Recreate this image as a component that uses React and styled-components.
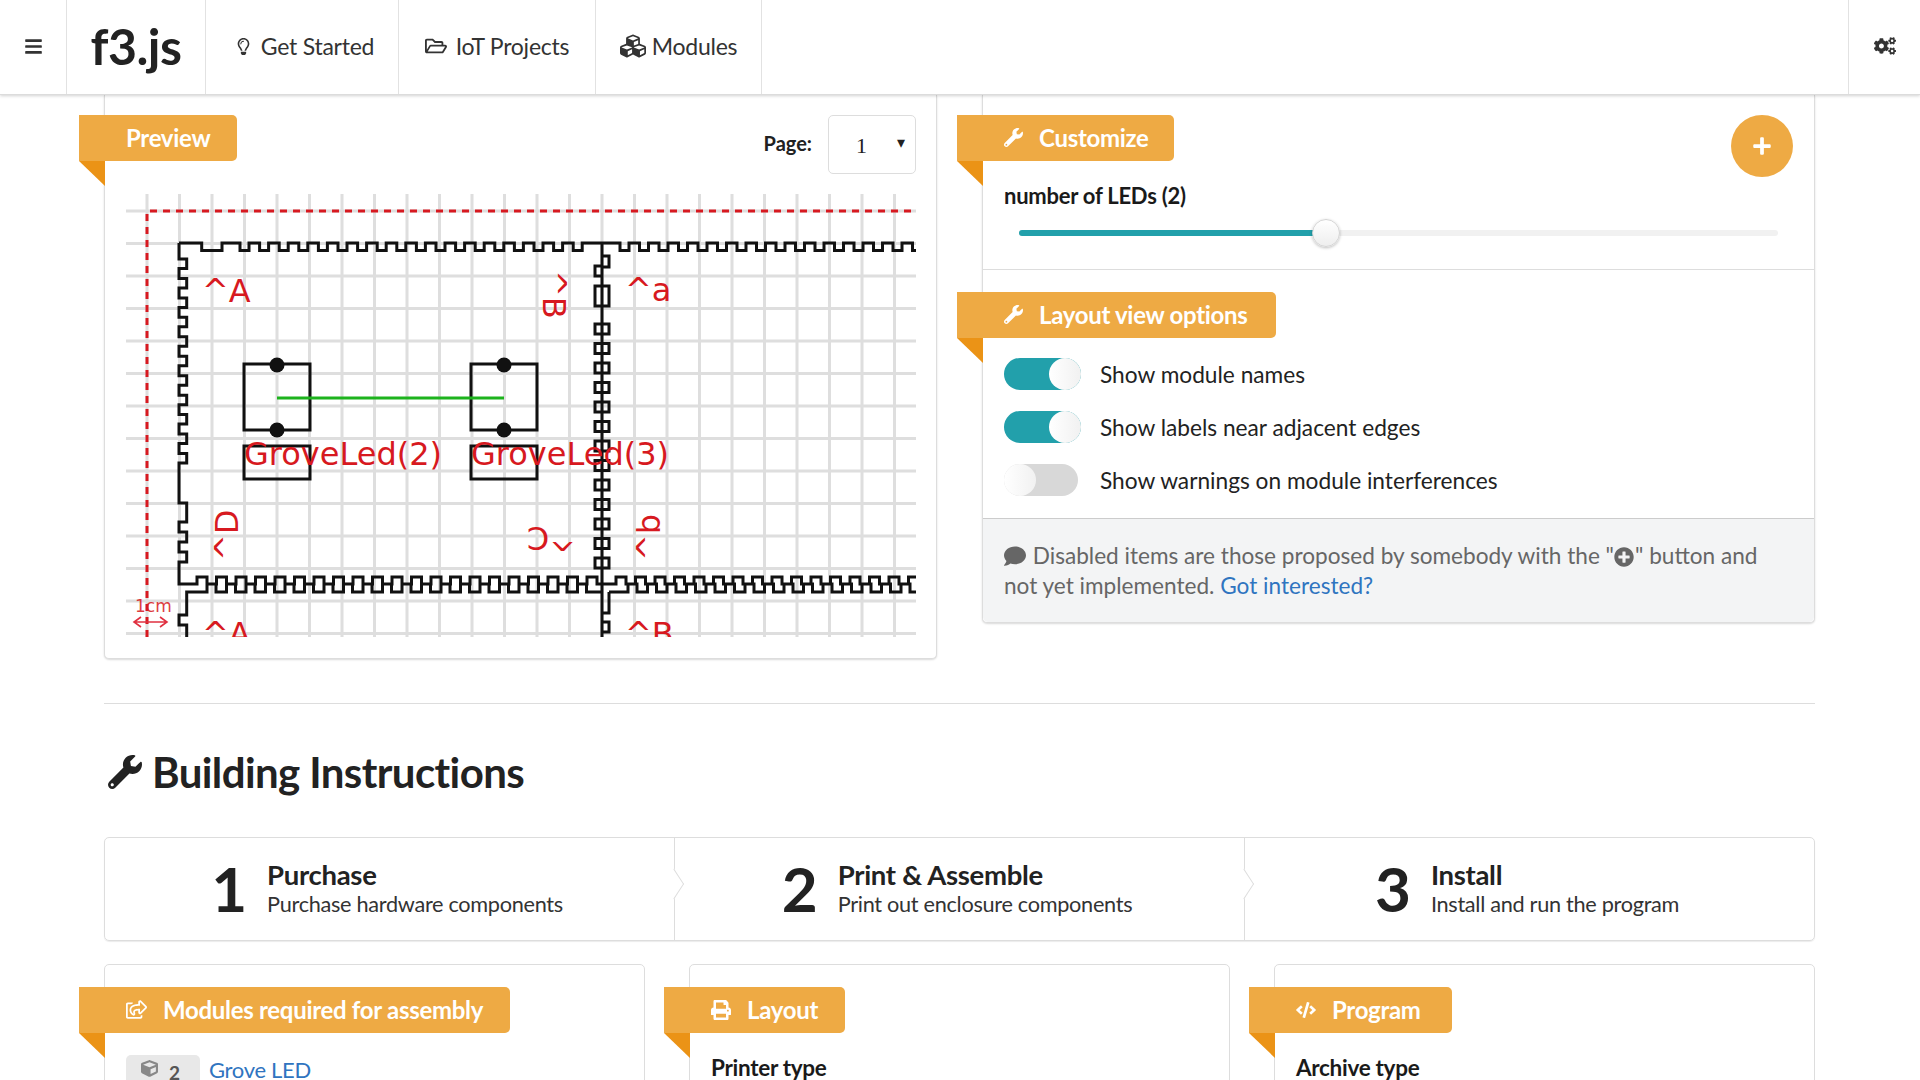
import React from "react";
import styled, { createGlobalStyle } from "styled-components";
import {
  FaBars, FaRegLightbulb, FaRegFolderOpen, FaCubes, FaCogs, FaWrench, FaPlus,
  FaComment, FaPlusCircle, FaRegShareSquare, FaPrint, FaCode, FaCube,
} from "react-icons/fa";

const Global = createGlobalStyle`
  html, body { margin: 0; padding: 0; height: 1080px; overflow: hidden; background: #fff; }
  body { font-family: Lato, "Noto Sans", sans-serif; color: #212121; }
  * { box-sizing: border-box; }
`;

const Viewport = styled.div`width: 1920px; height: 1080px; overflow: hidden; display: flex; flex-direction: column;`;
const Nav = styled.nav`
  height: 95px; flex: none; display: flex; align-items: stretch; background: #fff;
  border-bottom: 1px solid #dcdcdc; box-shadow: 0 1px 3px rgba(0,0,0,.18); position: relative; z-index: 2;
`;
const NavCell = styled.div`
  width: ${p => p.$w}px; flex: none; display: flex; align-items: center; justify-content: center; gap: ${p => p.$gap || 9}px;
  border-right: 1px solid #e2e2e2; font-size: 23px; letter-spacing: -.25px; color: #333; padding: 0 0 2px ${p => p.$pad || 0}px;
`;
const Logo = styled(NavCell)`font-size: 50px; font-weight: 700; color: #222; letter-spacing: -.5px;`;
const NavFill = styled.div`flex: 1;`;
const NavEnd = styled(NavCell)`border-right: 0; border-left: 1px solid #e2e2e2;`;

const Main = styled.main`flex: 1; padding: 0 105px 0 104px; min-height: 0;`;
const TopRow = styled.div`display: grid; grid-template-columns: 833px 833px; column-gap: 45px; align-items: start;`;
const Panel = styled.section`
  position: relative; background: #fff; border: 1px solid #ddd; border-top: 0; border-radius: 0 0 5px 5px;
  box-shadow: 0 1px 2px rgba(0,0,0,.15);
`;
const PreviewPanel = styled(Panel)`height: 564px; padding-top: 20px;`;
const Ribbon = styled.div`
  position: relative; width: ${p => p.$w}px; height: 46px; margin-left: -26px; background: #eeaa44; border-radius: 0 5px 5px 0;
  display: flex; align-items: center; color: #fff; font-weight: 700; font-size: 24px; letter-spacing: -.3px; gap: 16px;
  padding-left: 47px; padding-bottom: 1px;
  &::after {
    content: ""; position: absolute; left: 0; top: 100%; width: 26px; height: 25px; background: #eb9316;
    clip-path: polygon(0 0, 100% 0, 100% 100%);
  }
`;
const PreviewHead = styled.div`display: flex; justify-content: space-between; align-items: flex-start;`;
const PageBox = styled.div`display: flex; align-items: center; gap: 16px; margin-right: 20px; font-size: 20px; font-weight: 700;`;
const PageLabel = styled.span`margin-top: -3px;`;
const PageSelect = styled.div`
  width: 88px; height: 59px; border: 1px solid #ddd; border-radius: 5px; display: flex; align-items: center; justify-content: space-between;
  padding: 2px 10px 0 27px; font-size: 22px; font-weight: 400; font-family: "Liberation Serif", serif; color: #222;
`;
const Arrow = styled.span`font-size: 16px; color: #222; margin-top: -6px;`;
const Drawing = styled.svg`display: block; margin: 20px 0 0 21px;`;

const SidePanel = styled(Panel)`padding: 0;`;
const Section = styled.div`position: relative; padding-top: 20px; `;
const CustomizeSection = styled(Section)`height: 175px; border-bottom: 1px solid #ddd;`;
const Label = styled.div`font-size: 22px; font-weight: 700; color: #1a1a1a; letter-spacing: -.25px; margin: 22px 0 0 21px; line-height: 26px;`;
const Track = styled.div`position: relative; height: 6px; margin: 21px 36px 0 36px; background: #f1f1f1; border-radius: 3px;`;
const Fill = styled.div`height: 100%; background: #22a0ab; border-radius: 3px;`;
const Handle = styled.div`
  position: absolute; top: -11px; width: 28px; height: 28px; margin-left: -14px; border-radius: 50%;
  background: linear-gradient(#fff, #eee); border: 1px solid #d4d4d4; box-shadow: 0 1px 3px rgba(0,0,0,.25);
`;
const AddButton = styled.div`
  position: absolute; right: 21px; top: 20px; width: 62px; height: 62px; border-radius: 50%; background: #eeaa44; color: #fff;
  display: flex; align-items: center; justify-content: center; font-size: 20px;
`;
const OptionsSection = styled(Section)`height: 248px; padding-top: 22px;`;
const Options = styled.div`display: flex; flex-direction: column; gap: 21px; margin: 20px 0 0 21px;`;
const Option = styled.div`display: flex; align-items: center; gap: 19px; height: 32px; font-size: 22.7px; color: #222;`;
const Toggle = styled.div`
  position: relative; width: ${p => p.$on ? 77 : 74}px; margin-right: ${p => p.$on ? 0 : 3}px; height: 32px; border-radius: 16px; flex: none; background: ${p => p.$on ? "#22a0ab" : "#d8d8d8"};
  &::after {
    content: ""; position: absolute; top: 0; ${p => p.$on ? "right: 0;" : "left: 0;"} width: 32px; height: 32px; border-radius: 16px;
    background: linear-gradient(90deg, #fff, #f1f1f1); 
  }
`;
const Note = styled.div`
  background: #f3f4f5; border-top: 1px solid #ccc; padding: 22px 40px 20px 21px; font-size: 22.6px; line-height: 30px; color: #666;
  height: 104px; border-radius: 0 0 5px 5px;
  svg { vertical-align: -3px; margin-right: 1px; }
`;
const Link = styled.a`color: #2f74c0; text-decoration: none;`;

const Divider = styled.hr`border: 0; border-top: 1px solid #ddd; margin: 44px 0 0;`;
const Heading = styled.h2`
  margin: 45px 0 0 4px; height: 46px; display: flex; align-items: center; gap: 10px; font-size: 42px; font-weight: 700; color: #222; letter-spacing: -.6px;
`;
const Steps = styled.div`
  margin-top: 42px; display: grid; grid-template-columns: 570px 570px 1fr; height: 104px; border: 1px solid #ddd; border-radius: 5px;
  box-shadow: 0 1px 1px rgba(0,0,0,.08);
`;
const Step = styled.div`
  position: relative; display: flex; align-items: center; justify-content: center; gap: 20px; padding: 0 5px 2px 0; border-right: ${p => p.$last ? "0" : "1px solid #ddd"};
  ${p => !p.$last && `&::after {
    content: ""; position: absolute; right: -9px; top: 37px; width: 17px; height: 17px; transform: rotate(45deg) skew(12deg,12deg);
    background: #fff; border-top: 1px solid #ddd; border-right: 1px solid #ddd;
  }`}
`;
const StepNum = styled.div`font-size: 62px; font-weight: 700; color: #222; line-height: 1;`;
const StepText = styled.div`display: flex; flex-direction: column; gap: 0;`;
const StepTitle = styled.div`font-size: 27.5px; font-weight: 700; line-height: 32px; color: #222; letter-spacing: -.3px;`;
const StepDesc = styled.div`font-size: 21.7px; line-height: 26px; color: #333; letter-spacing: -.3px;`;

const BottomRow = styled.div`margin-top: 23px; display: grid; grid-template-columns: 541px 541px 541px; column-gap: 44px;`;
const BottomCard = styled.div`height: 200px; border: 1px solid #ddd; border-radius: 5px; padding-top: 22px;`;
const Chip = styled.span`
  display: inline-flex; align-items: flex-start; gap: 11px; width: 74px; height: 40px; padding: 3px 0 0 15px; background: #e8e8e8; border-radius: 5px 5px 0 0;
  font-size: 19px; font-weight: 700; color: #555; margin-right: 9px; svg { color: #888; margin-top: 2px; }
`;
const ModuleRow = styled.div`display: flex; align-items: flex-start; margin: 22px 0 0 21px; font-size: 22px; line-height: 30px; letter-spacing: -.3px;`;
const FieldLabel = styled.div`margin: 21px 0 0 21px; font-size: 22.5px; font-weight: 700; color: #1a1a1a; letter-spacing: -.3px;`;

function range(n) { return Array.from({ length: n }, (_, i) => i); }
function boxPath() {
  let d = "M179,243 H201.7 V250.5 H222 V243";
  range(18).forEach(i => { const x = 240 + i * 19.6; d += ` H${x} V250.5 H${x + 9} V243`; });
  d += " H620";
  range(15).forEach(i => { const x = 620 + i * 19.5; d += ` V250.5 H${x + 9} V243 H${x + 19.5}`; });
  d += " V250.5 H916";
  d += " M179,243 V259";
  range(11).forEach(i => { const y = 259 + i * 19.45; d += ` H186.7 V${y + 9.5} H179 V${y + 19.45}`; });
  d += " M179,473 V503 H186.7 V522 H179 V532 H186.7 V542 H179 V552 H186.7 V562 H179 V584";
  range(21).forEach(i => { const x = 197 + i * 19.5; d += ` H${x} V577 H${x + 10} V584`; });
  d += " H602";
  range(16).forEach(i => { const x = 616 + i * 19.5; d += ` H${x} V577 H${x + 10} V584`; });
  d += " H916";
  d += " M186.7,637 V625 H179 V615 H186.7 V592";
  range(20).forEach(i => { const x = 207 + i * 19.5; d += ` H${x} V584 H${x + 9} V592`; });
  d += " H602 M609,592";
  range(15).forEach(i => { const x = 628 + i * 19.5; d += ` H${x} V584 H${x + 9} V592`; });
  d += " H916";
  d += " M602,243 V584 M602,584 V637 M609,592 V613 H602 M602,622 H609 V632 H602";
  d += " M602,256 H609 V267 H602 M602,266 H595 V276 H602";
  d += " M595,286 H609 V306 H595 Z";
  range(13).forEach(i => { const y = 324 + i * 19.5; d += ` M595,${y} H609 V${y + 10} H595 Z`; });
  return d;
}

function Preview() {
  const vs = range(24).map(i => 147 + i * 32.5);
  const hs = range(14).map(i => 211 + i * 32.5);
  return (
    <Drawing width="790" height="443" viewBox="126 194 790 443">
      <g stroke="#dedede" strokeWidth="3">
        {vs.map(x => <line key={x} x1={x} x2={x} y1="194" y2="637" />)}
        {hs.map(y => <line key={y} x1="126" x2="916" y1={y} y2={y} />)}
      </g>
      <path d="M147,637 V211 H916" fill="none" stroke="#d71920" strokeWidth="3" strokeDasharray="7 6" />
      <path d={boxPath()} fill="none" stroke="#111" strokeWidth="3" />
      <g fill="none" stroke="#111" strokeWidth="3">
        <rect x="244" y="364" width="66" height="66" />
        <rect x="471" y="364" width="66" height="66" />
        <rect x="244" y="446" width="66" height="33" />
        <rect x="471" y="446" width="66" height="33" />
      </g>
      <line x1="277" x2="504" y1="398" y2="398" stroke="#1db31d" strokeWidth="3" />
      <g fill="#111">
        <circle cx="277" cy="365" r="7.5" /><circle cx="277" cy="430" r="7.5" />
        <circle cx="504" cy="365" r="7.5" /><circle cx="504" cy="430" r="7.5" />
      </g>
      <g fill="#d71920" fontFamily="'DejaVu Sans', sans-serif" fontSize="32">
        <text x="244" y="465">GroveLed(2)</text>
        <text x="471" y="465">GroveLed(3)</text>
        <text x="202" y="302">^A</text>
        <text x="625" y="301">^a</text>
        <text x="202" y="645">^A</text>
        <text x="625" y="645">^B</text>
        <text transform="rotate(90 543 270)" x="543" y="270">^B</text>
        <text transform="rotate(-90 238 561)" x="238" y="561">^D</text>
        <text transform="rotate(-90 660 561)" x="660" y="561">^b</text>
        <text transform="rotate(180 576 527)" x="576" y="527">^C</text>
        <text x="135" y="612" fontSize="17" opacity=".85">1cm</text>
      </g>
      <path d="M135,622 H166 M141,617 L134,622 L141,627 M160,617 L167,622 L160,627" fill="none" stroke="#e03040" strokeWidth="1.6" />
    </Drawing>
  );
}

export default function App() {
  return (
    <Viewport>
      <Global />
      <Nav>
        <NavCell $w={67}><FaBars size={19} /></NavCell>
        <Logo $w={139}>f3.js</Logo>
        <NavCell $w={193} $pad={5}><FaRegLightbulb size={17} />Get Started</NavCell>
        <NavCell $w={197}><FaRegFolderOpen size={22} />IoT Projects</NavCell>
        <NavCell $w={166} $gap={6}><FaCubes size={26} />Modules</NavCell>
        <NavFill />
        <NavEnd $w={72}><FaCogs size={22} /></NavEnd>
      </Nav>
      <Main>
        <TopRow>
          <PreviewPanel>
            <PreviewHead>
              <Ribbon $w={158}>Preview</Ribbon>
              <PageBox><PageLabel>Page:</PageLabel><PageSelect>1<Arrow>▾</Arrow></PageSelect></PageBox>
            </PreviewHead>
            <Preview />
          </PreviewPanel>
          <SidePanel>
            <CustomizeSection>
              <Ribbon $w={217}><FaWrench size={19} />Customize</Ribbon>
              <AddButton><FaPlus /></AddButton>
              <Label>number of LEDs (2)</Label>
              <Track>
                <Fill style={{ width: "307px" }} />
                <Handle style={{ left: "307px" }} />
              </Track>
            </CustomizeSection>
            <OptionsSection>
              <Ribbon $w={319}><FaWrench size={19} />Layout view options</Ribbon>
              <Options>
                <Option><Toggle $on />Show module names</Option>
                <Option><Toggle $on />Show labels near adjacent edges</Option>
                <Option><Toggle />Show warnings on module interferences</Option>
              </Options>
            </OptionsSection>
            <Note>
              <FaComment size={22} /> Disabled items are those proposed by somebody with the "<FaPlusCircle size={20} />" button and not yet implemented. <Link>Got interested?</Link>
            </Note>
          </SidePanel>
        </TopRow>
        <Divider />
        <Heading><FaWrench size={34} />Building Instructions</Heading>
        <Steps>
          <Step><StepNum>1</StepNum><StepText><StepTitle>Purchase</StepTitle><StepDesc>Purchase hardware components</StepDesc></StepText></Step>
          <Step><StepNum>2</StepNum><StepText><StepTitle>Print &amp; Assemble</StepTitle><StepDesc>Print out enclosure components</StepDesc></StepText></Step>
          <Step $last><StepNum>3</StepNum><StepText><StepTitle>Install</StepTitle><StepDesc>Install and run the program</StepDesc></StepText></Step>
        </Steps>
        <BottomRow>
          <BottomCard>
            <Ribbon $w={431}><FaRegShareSquare size={21} />Modules required for assembly</Ribbon>
            <ModuleRow><Chip><FaCube size={17} />2</Chip><Link>Grove LED</Link></ModuleRow>
          </BottomCard>
          <BottomCard>
            <Ribbon $w={181}><FaPrint size={20} />Layout</Ribbon>
            <FieldLabel>Printer type</FieldLabel>
          </BottomCard>
          <BottomCard>
            <Ribbon $w={203}><FaCode size={20} />Program</Ribbon>
            <FieldLabel>Archive type</FieldLabel>
          </BottomCard>
        </BottomRow>
      </Main>
    </Viewport>
  );
}
